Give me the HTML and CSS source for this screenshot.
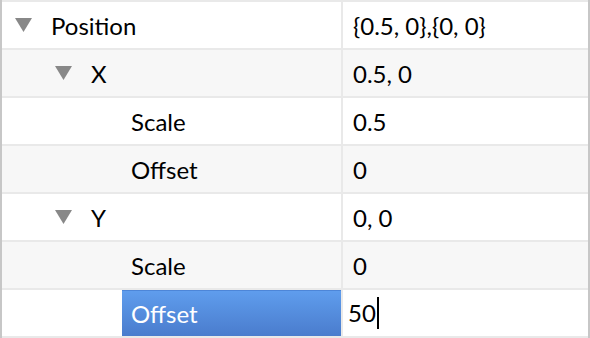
FILE: index.html
```html
<!DOCTYPE html>
<html lang="en">

<head>
  <meta charset="UTF-8">
  <meta name="viewport" content="width=device-width, initial-scale=1.0">
  <title>Properties</title>

  <link rel="stylesheet" href="styles.css">
</head>

<body>
  <div id="props">
    <!-- Position -->
    <div class="row">
      <div class="name lvl0">
        <svg class="toggle" width="17" height="14" viewBox="0 0 17 14"><polygon points="0,0 17,0 8.5,14" /></svg>
        <span class="label">Position</span>
      </div>
      <div class="value">{0.5, 0},{0, 0}</div>
    </div>
    <div class="row">
      <div class="name lvl1">
        <svg class="toggle" width="17" height="14" viewBox="0 0 17 14"><polygon points="0,0 17,0 8.5,14" /></svg>
        <span class="label">X</span>
      </div>
      <div class="value">0.5, 0</div>
    </div>
    <div class="row">
      <div class="name leaf">
        <span class="label">Scale</span>
      </div>
      <div class="value">0.5</div>
    </div>
    <div class="row">
      <div class="name leaf">
        <span class="label">Offset</span>
      </div>
      <div class="value">0</div>
    </div>
    <div class="row">
      <div class="name lvl1">
        <svg class="toggle" width="17" height="14" viewBox="0 0 17 14"><polygon points="0,0 17,0 8.5,14" /></svg>
        <span class="label">Y</span>
      </div>
      <div class="value">0, 0</div>
    </div>
    <div class="row">
      <div class="name leaf">
        <span class="label">Scale</span>
      </div>
      <div class="value">0</div>
    </div>
    <div class="row">
      <div class="name leaf">
        <span class="label selected">Offset</span>
      </div>
      <div class="value editing"><span class="caret">50</span></div>
    </div>
  </div>
</body>

</html>
```

FILE: styles.css
```css
body {
  margin: 0;
  font-family: Lato, "Open Sans", sans-serif;
  font-size: 24px;
  color: #000;
}

#props {
  width: 586px;
  height: 336px;
  padding-top: 2px;
  border-left: 2px solid #c7c7c7;
  border-right: 2px solid #c7c7c7;
  background-color: #e9e9e9;
}

#props .row {
  display: grid;
  grid-template-columns: 339px 1fr;
  column-gap: 2px;
  height: 46px;
  margin-bottom: 2px;
}

#props .row > div {
  background-color: #fff;
}

#props .row:nth-child(even) > div {
  background-color: #f7f7f7;
}

.name {
  display: flex;
  align-items: stretch;
}

.name.lvl0 {
  padding-left: 13px;
}

.name.lvl1 {
  padding-left: 53px;
}

.name.leaf {
  padding-left: 120px;
}

.toggle {
  align-self: center;
  margin-right: 10px;
  fill: #888;
}

.label {
  display: flex;
  align-items: center;
  flex: 1;
  padding-left: 9px;
}

.label.selected {
  color: #fff;
  background: linear-gradient(#5f9ded, #4a7ccd);
  border-top: 1px solid #4d86d8;
}

.value {
  display: flex;
  align-items: center;
  padding-left: 10px;
}

.value.editing {
  padding-left: 5px;
}

.caret {
  padding-right: 1px;
  border-right: 2px solid #000;
  line-height: 32px;
}
```
